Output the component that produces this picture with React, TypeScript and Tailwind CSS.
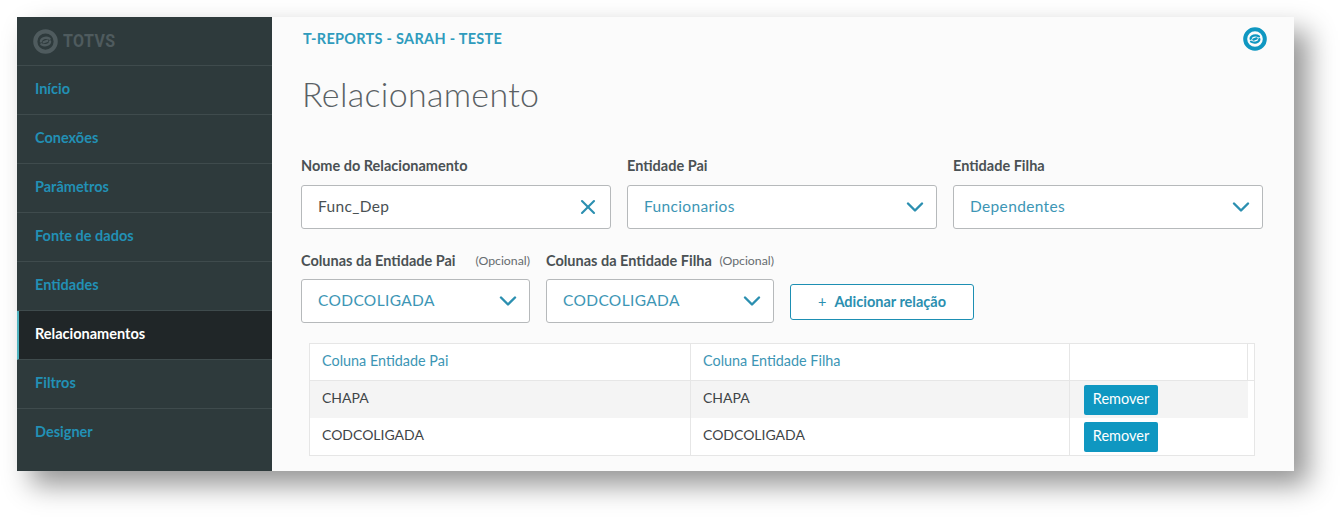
import { ChevronDown, X } from 'lucide-react';

const FONT = "font-['Lato','Open_Sans',sans-serif]";

const menu = ['Início', 'Conexões', 'Parâmetros', 'Fonte de dados', 'Entidades', 'Relacionamentos', 'Filtros', 'Designer'];

const rows = ['CHAPA', 'CODCOLIGADA'];

function Logo({ className, color }: { className: string; color: string }) {
  return (
    <svg viewBox="0 0 24 24" className={className}>
      <circle cx="12" cy="12" r="9.8" fill="none" stroke={color} strokeWidth="4" />
      <g fill="none" stroke={color} strokeLinecap="round">
        <path d="M7.6 12 C7.6 8.6 12.6 7.4 16 9.4" strokeWidth="2.2" />
        <path d="M16.4 12 C16.4 15.4 11.4 16.6 8 14.6" strokeWidth="2.2" />
        <path d="M10.4 12.6 L13.6 11.4" strokeWidth="2.4" />
      </g>
    </svg>
  );
}

function Label({ text, hint }: { text: string; hint?: string }) {
  return (
    <div className="flex h-[18px] items-center justify-between">
      <span className="text-[14.5px] font-bold text-[#4a5154]">{text}</span>
      {hint && <span className="text-[12.3px] text-[#666c6f]">{hint}</span>}
    </div>
  );
}

function Field({ value, clear, dark }: { value: string; clear?: boolean; dark?: boolean }) {
  return (
    <div className={`flex h-[44px] items-center justify-between rounded-[3px] border border-[#b6b9bb] bg-white pl-4 ${clear ? 'pr-[10px]' : 'pr-[7px]'}`}>
      <span className={`text-[15.5px] tracking-[0.35px] ${dark ? 'text-[#4a5154]' : 'text-[#3d96b5]'}`}>{value}</span>
      {clear ? (
        <X size={24} strokeWidth={2.1} className="text-[#2b8fb0]" />
      ) : (
        <ChevronDown size={28} strokeWidth={2.1} className="text-[#2b8fb0]" />
      )}
    </div>
  );
}

export default function App() {
  return (
    <div className={`h-[519px] w-[1342px] overflow-hidden bg-white pl-[17px] pt-[17px] ${FONT}`}>
      <div className="flex h-[454px] w-[1277px] bg-[#fbfbfb] shadow-[14px_14px_26px_rgba(0,0,0,0.42)]">
        <aside className="w-[255px] shrink-0 bg-[#2e3a3c]">
          <div className="flex h-[49px] items-center gap-[5px] border-b border-[#3f4b4d] pl-[16px]">
            <Logo className="h-[25px] w-[25px]" color="#4f5b5e" />
            <span className="origin-left scale-x-[0.84] font-['Roboto',sans-serif] text-[19px] font-bold tracking-[0.5px] text-[#4f5b5e]">TOTVS</span>
          </div>
          {menu.map((item) => {
            const active = item === 'Relacionamentos';
            return (
              <div
                key={item}
                className={`flex h-[49px] items-center border-b pb-[2px] text-[14.5px] font-bold ${
                  item === 'Designer' ? 'border-transparent' : 'border-[#3f4b4d]'
                } ${
                  active
                    ? 'border-l-2 border-l-[#4fb3bf] bg-[#202628] pl-4 text-white'
                    : 'pl-[18px] text-[#2290b5]'
                }`}
              >
                {item}
              </div>
            );
          })}
        </aside>

        <main className="flex-1 pl-[29px] pr-[31px]">
          <div className="flex h-[42px] items-start justify-between pt-[13px]">
            <span className="pl-[2px] text-[14.5px] font-bold leading-[18px] tracking-[0.28px] text-[#2f9bbd]">T-REPORTS - SARAH - TESTE</span>
            <Logo className="mr-[-4px] mt-[-3px] h-6 w-6" color="#0f97c1" />
          </div>

          <h1 className="mt-[13px] h-[44px] pl-px text-[34px] font-light leading-[44px] tracking-[0.3px] text-[#5a6164]">Relacionamento</h1>

          <div className="mt-[41px] grid grid-cols-3 gap-x-4">
            <div>
              <Label text="Nome do Relacionamento" />
              <div className="mt-[10px]"><Field value="Func_Dep" clear dark /></div>
            </div>
            <div>
              <Label text="Entidade Pai" />
              <div className="mt-[10px]"><Field value="Funcionarios" /></div>
            </div>
            <div>
              <Label text="Entidade Filha" />
              <div className="mt-[10px]"><Field value="Dependentes" /></div>
            </div>
          </div>

          <div className="mt-[23px] flex gap-4">
            <div className="w-[229px]">
              <Label text="Colunas da Entidade Pai" hint="(Opcional)" />
              <div className="mt-[9px]"><Field value="CODCOLIGADA" /></div>
            </div>
            <div className="w-[228px]">
              <Label text="Colunas da Entidade Filha" hint="(Opcional)" />
              <div className="mt-[9px]"><Field value="CODCOLIGADA" /></div>
            </div>
            <button className="mt-[32px] flex h-[36px] w-[184px] items-center justify-center gap-2 rounded-[3px] border border-[#1d8fb3] bg-white text-[14.5px] font-bold text-[#2b8fb0]">
              <span className="font-normal">+</span>
              Adicionar relação
            </button>
          </div>

          <div className="ml-[8px] mt-5 w-[946px] border border-[#e6e6e6] bg-white text-[14px]">
            <div className="grid h-[37px] grid-cols-[381px_379px_178px_1fr] border-b border-[#e6e6e6] text-[14.4px] text-[#3d96b5]">
              <div className="flex items-center border-r border-[#e6e6e6] pb-[2px] pl-3">Coluna Entidade Pai</div>
              <div className="flex items-center border-r border-[#e6e6e6] pb-[2px] pl-3">Coluna Entidade Filha</div>
              <div className="border-r border-[#e6e6e6]" />
              <div />
            </div>
            {rows.map((row, i) => (
              <div key={row} className="grid h-[37px] grid-cols-[381px_379px_178px_1fr] text-[#3f4547]">
                <div className={`flex items-center border-r border-[#e6e6e6] pb-[4px] pl-3 ${i === 0 ? 'bg-[#f4f4f4]' : ''}`}>{row}</div>
                <div className={`flex items-center border-r border-[#e6e6e6] pb-[4px] pl-3 ${i === 0 ? 'bg-[#f4f4f4]' : ''}`}>{row}</div>
                <div className={`flex items-center pl-[14px] ${i === 0 ? 'bg-[#f4f4f4]' : ''}`}>
                  <button className="h-[30px] w-[74px] rounded-[2px] bg-[#0f97c1] pb-px text-[14.5px] text-white">Remover</button>
                </div>
                <div />
              </div>
            ))}
          </div>
        </main>
      </div>
    </div>
  );
}
